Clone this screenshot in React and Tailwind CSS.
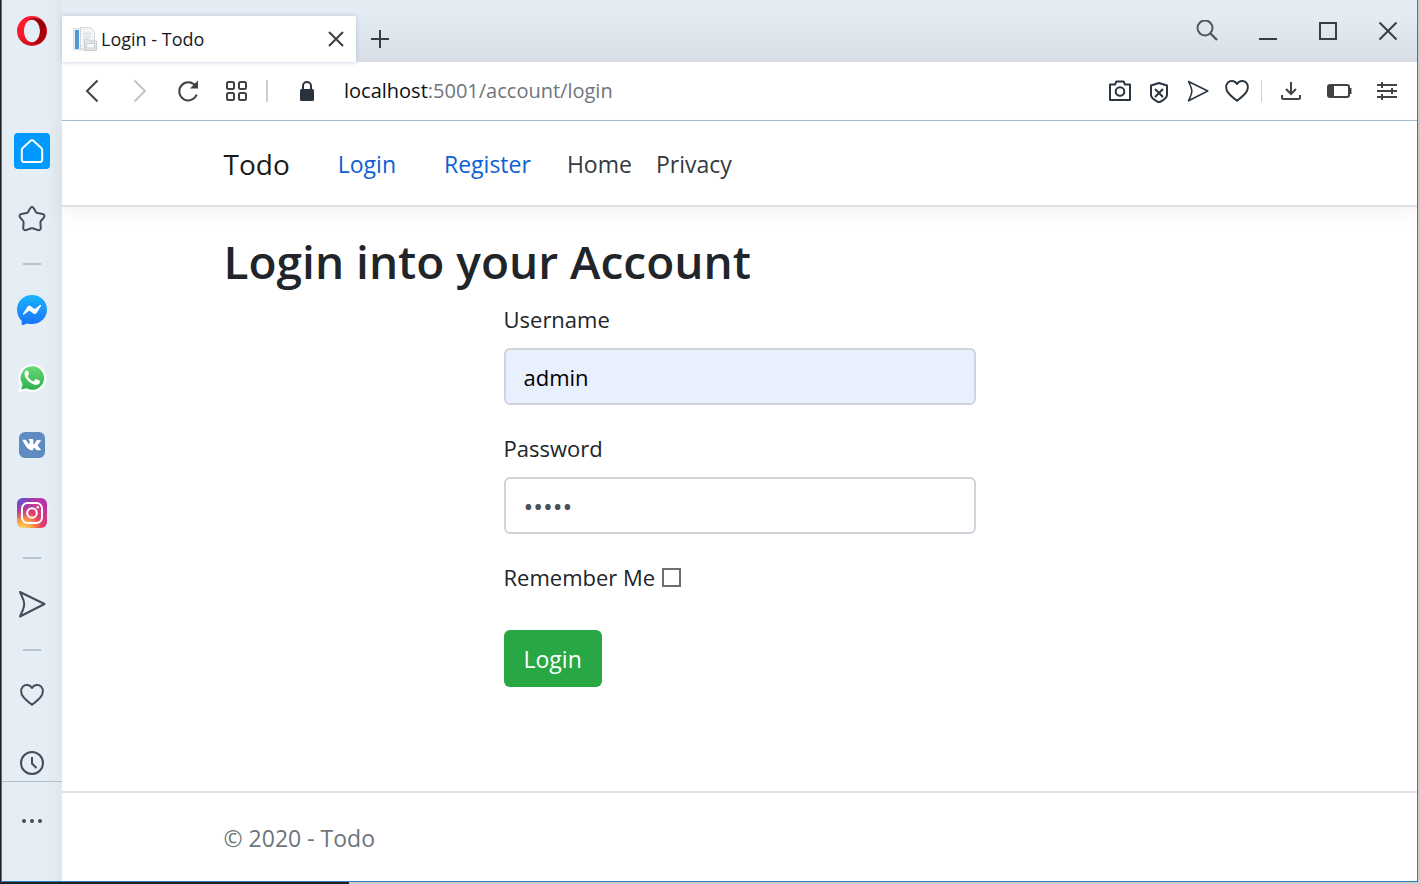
import React from "react";

function Svg({ w = 24, h = w, box, className = "", children }) {
  return (
    <svg
      width={w}
      height={h}
      viewBox={box || `0 0 ${w} ${h}`}
      fill="none"
      stroke="currentColor"
      strokeWidth="2"
      className={`shrink-0 ${className}`}
      aria-hidden="true"
    >
      {children}
    </svg>
  );
}

function OperaLogo() {
  return (
    <Svg w={30}>
      <defs>
        <linearGradient id="op-l" x1="0" y1="0" x2="0" y2="1">
          <stop offset="0" stopColor="#ff1b2d" />
          <stop offset="0.6" stopColor="#fa1a2c" />
          <stop offset="1" stopColor="#c8101f" />
        </linearGradient>
        <linearGradient id="op-r" x1="0" y1="0" x2="0" y2="1">
          <stop offset="0" stopColor="#8f0009" />
          <stop offset="1" stopColor="#b8000f" />
        </linearGradient>
      </defs>
      <path
        fillRule="evenodd"
        stroke="none"
        fill="url(#op-l)"
        d="M15 0a15 15 0 1 0 0 30a15 15 0 1 0 0-30zM15 3.6c4.4 0 8 5 8 11.4s-3.600 11.400-8 11.400-8-5-8-11.400 3.600-11.400 8-11.400z"
      />
      <path
        stroke="none"
        fill="url(#op-r)"
        d="M10 5.600C12 3 14.500 2 17 2.200c3.200.200 5.500 1 7.500 1.600a15 15 0 0 1 0 22.400c-3 1.300-5 1.800-7.500 1.600-2.500-.200-5-1.200-7-3.400 1.400 1.200 3.200 2 5 2 4.400 0 8-5 8-11.400S19.400 3.600 15 3.600c-1.800 0-3.600.800-5 2z"
      />
    </Svg>
  );
}

function HomeIcon() {
  return (
    <Svg w={24} className="text-white">
      <path strokeLinejoin="round" d="M12 1.200c.700 0 1.200.200 1.700.700l7.300 6.800c.800.700 1.200 1.500 1.200 2.500v9.300a2.500 2.500 0 0 1-2.500 2.500H4.300a2.500 2.500 0 0 1-2.500-2.500v-9.300c0-1 .400-1.800 1.200-2.500l7.300-6.800c.500-.500 1-.700 1.700-.700z" />
    </Svg>
  );
}

function StarIcon() {
  return (
    <Svg w={28}>
      <path
        strokeLinejoin="round"
        d="M12.200 3.200c.800-1.500 2.800-1.500 3.600 0l2.100 3.700c.300.500.800.900 1.400 1l5.400 1c1.700.300 2.300 2.100 1.200 3.400l-3 3.700c-.400.500-.500 1-.500 1.600l.4 5.300c.1 1.700-1.300 2.700-2.800 2.200l-4.600-1.600c-.900-.300-1.900-.300-2.800 0L8 25.100c-1.500.500-2.900-.500-2.800-2.200l.4-5.300c0-.600-.1-1.100-.5-1.600l-3-3.700c-1.100-1.300-.5-3.100 1.200-3.400l5.400-1c.600-.100 1.100-.5 1.400-1z"
      />
    </Svg>
  );
}

function MessengerIcon() {
  return (
    <Svg w={30}>
      <defs>
        <linearGradient id="msg" x1="0" y1="0" x2="0" y2="1">
          <stop offset="0" stopColor="#19b5fb" />
          <stop offset="1" stopColor="#1a72fb" />
        </linearGradient>
      </defs>
      <path stroke="none" fill="url(#msg)" d="M15 0c8.500 0 15 6.200 15 14.500S23.500 29 15 29c-1.700 0-3.200-.200-4.600-.600L6 30c-.800.300-1.300-.200-1.300-1l-.1-3.300C1.700 23 0 19.200 0 14.500 0 6.200 6.500 0 15 0z" />
      <path stroke="none" fill="#fff" d="M6 18.700l4.400-7c.700-1.100 2.200-1.400 3.200-.600l3.500 2.600c.300.200.800.200 1.100 0l4.700-3.600c.600-.5 1.500.3 1.100.9l-4.400 7c-.7 1.100-2.200 1.400-3.200.6l-3.500-2.600c-.3-.2-.8-.2-1.100 0l-4.700 3.600c-.6.5-1.500-.3-1.100-.9z" />
    </Svg>
  );
}

function WhatsAppIcon() {
  return (
    <Svg w={30}>
      <defs>
        <linearGradient id="wa" x1="0" y1="0" x2="0" y2="1">
          <stop offset="0" stopColor="#68d878" />
          <stop offset="1" stopColor="#2fb14a" />
        </linearGradient>
      </defs>
      <path stroke="none" fill="#fbfdfc" d="M15.500 1A14 14 0 1 1 9 27.400L1 29.600l2.200-7.700A14 14 0 0 1 15.500 1z" />
      <path stroke="none" fill="url(#wa)" d="M15.500 3.200A11.800 11.800 0 1 1 9.400 25.200L4.200 26.500l1.400-5A11.800 11.800 0 0 1 15.500 3.200z" />
      <path stroke="none" fill="#fff" d="M11.300 8.500c-.4-.9-.8-.9-1.300-.9-.9 0-2.500 1-2.500 3.400 0 2.500 1.900 5 3.100 6.300 1.600 1.800 4.500 4.300 8 4.600 2 .2 3.700-1 4.100-2 .3-.9.3-1.700.2-1.900-.2-.4-3.100-1.700-3.600-1.800-.5-.2-.8-.1-1.100.3l-1.200 1.500c-.3.4-.7.4-1.100.2-2.200-.9-4.200-2.800-5.100-4.600-.2-.4 0-.7.2-1l.9-1.100c.3-.4.2-.7.1-1z" />
    </Svg>
  );
}

function VkIcon() {
  return (
    <Svg w={26}>
      <rect width="26" height="26" rx="6" fill="#5f8cc0" stroke="none" />
      <path stroke="none" fill="#fff" d="M12.800 18.700h1.100s.4 0 .5-.3c.2-.2.2-.6.2-.6s0-1.900.8-2.200c.9-.3 2 1.800 3.200 2.600.9.6 1.600.5 1.600.5l3-.1s1.600-.1.800-1.400c-.1-.1-.5-1-2.400-2.800-2-1.900-1.700-1.600.7-4.800 1.400-1.900 2-3.100 1.800-3.600-.2-.5-1.200-.4-1.200-.4l-3.400.1s-.3 0-.4.1c-.2.1-.3.3-.3.3s-.5 1.400-1.200 2.600c-1.500 2.600-2.200 2.700-2.400 2.600-.6-.4-.4-1.600-.4-2.500 0-2.600.4-3.700-.8-4-.4-.1-.7-.2-1.700-.2-1.300 0-2.400 0-3 .3-.4.2-.7.7-.5.7.2 0 .7.1 1 .5.3.5.3 1.500.3 1.500s.2 2.900-.4 3.200c-.5.3-1.100-.2-2.400-2.500C6.300 7.100 5.800 5.800 5.800 5.800s-.1-.2-.3-.3-.5-.2-.5-.2l-3 .1s-.5 0-.6.2c-.2.2 0 .5 0 .5s2.500 5.900 5.300 8.900c2.700 2.800 5.700 3.700 6.100 3.700z" transform="translate(2.500 3.400) scale(.8)" />
    </Svg>
  );
}

function InstagramIcon() {
  return (
    <Svg w={30}>
      <defs>
        <radialGradient id="ig" cx="0.2" cy="1.05" r="1.1">
          <stop offset="0" stopColor="#ffdd62" />
          <stop offset="0.3" stopColor="#fb9a45" />
          <stop offset="0.58" stopColor="#e93c67" />
          <stop offset="1" stopColor="#b634a8" />
        </radialGradient>
        <radialGradient id="ig2" cx="0" cy="0" r="0.75">
          <stop offset="0" stopColor="#3f5fdb" />
          <stop offset="1" stopColor="#8a3ac8" stopOpacity="0" />
        </radialGradient>
      </defs>
      <rect width="30" height="30" rx="6" fill="url(#ig)" stroke="none" />
      <rect width="30" height="30" rx="6" fill="url(#ig2)" stroke="none" />
      <rect x="5" y="5" width="20" height="20" rx="5.500" stroke="#fff" />
      <circle cx="15" cy="15" r="4.800" stroke="#fff" />
      <circle cx="20.800" cy="9.200" r="1.300" fill="#fff" stroke="none" />
    </Svg>
  );
}

function SendIcon({ size = 28, className }) {
  return (
    <Svg w={size} box="0 0 28 28" className={className}>
      <path strokeLinejoin="round" d="M2 2l24.500 12L2 26.500c1.800-4.500 4.200-8 4.200-12.500S3.800 6.500 2 2z" />
    </Svg>
  );
}

function HeartIcon() {
  return (
    <Svg w={24}>
      <path strokeLinejoin="round" d="M12 5C10 1.400 5.200 1 2.800 3.700c-2.400 2.800-1.900 6.900.3 9.900 2.200 3 5.500 5.600 8.900 8.100 3.400-2.500 6.700-5.100 8.900-8.100 2.200-3 2.700-7.100.3-9.900C18.800 1 14 1.400 12 5z" />
    </Svg>
  );
}

function ClockIcon() {
  return (
    <Svg w={26}>
      <circle cx="13" cy="13" r="11" />
      <path d="M13 7v6.500l4.500 4.500" />
    </Svg>
  );
}

function PageIcon() {
  return (
    <Svg w={24}>
      <path d="M.5 1.500h14V23H.5z" fill="#eef1f4" stroke="#dde1e5" strokeWidth="1" />
      <path d="M2 3h4v19H2z" fill="#4d9bd0" stroke="none" />
      <path d="M7.500.5h10l4 4V22h-14z" fill="#f3f4f5" stroke="#d5d8da" strokeWidth="1" />
      <path d="M10 6.500h8M10 9.500h8" stroke="#e1e4e6" />
      <path d="M11.500 12h4l1.500 2h6.500v9.500h-12z" fill="#e5e8ea" stroke="#c6cacd" strokeWidth="1" />
      <path d="M13.500 16.500h8v4.500h-8z" fill="#fafafa" stroke="#c9cdd0" strokeWidth="1" />
    </Svg>
  );
}

function SideButton({ label, active, children }) {
  return (
    <button
      type="button"
      aria-label={label}
      className={
        active
          ? "flex size-9 items-center justify-center rounded bg-[#0099ff]"
          : "flex size-9 items-center justify-center"
      }
    >
      {children}
    </button>
  );
}

function Divider() {
  return <span className="-my-[5px] h-[2px] w-[18px] shrink-0 bg-[#b7c3ce]" />;
}

function Sidebar() {
  return (
    <aside className="flex w-[60px] shrink-0 flex-col bg-linear-to-r from-[#e5edf5] from-70% to-[#dfe7ef] text-[#454c57]">
      <button type="button" aria-label="Opera menu" className="mb-[71px] flex h-[62px] items-center justify-center">
        <OperaLogo />
      </button>
      <nav aria-label="Sidebar" className="flex flex-1 flex-col items-center justify-between border-b border-[#b0c0cd]">
        <SideButton label="Home" active><HomeIcon /></SideButton>
        <SideButton label="Bookmarks"><StarIcon /></SideButton>
        <Divider />
        <SideButton label="Messenger"><MessengerIcon /></SideButton>
        <SideButton label="WhatsApp"><WhatsAppIcon /></SideButton>
        <SideButton label="VK"><VkIcon /></SideButton>
        <SideButton label="Instagram"><InstagramIcon /></SideButton>
        <Divider />
        <SideButton label="My Flow"><SendIcon /></SideButton>
        <Divider />
        <SideButton label="Favourites"><HeartIcon /></SideButton>
        <SideButton label="History"><ClockIcon /></SideButton>
      </nav>
      <button type="button" aria-label="More" className="mb-[22px] flex h-[77px] items-center justify-center">
        <Svg w={20} h={4}>
          <g fill="currentColor" stroke="none">
            <circle cx="2" cy="2" r="2" />
            <circle cx="10" cy="2" r="2" />
            <circle cx="18" cy="2" r="2" />
          </g>
        </Svg>
      </button>
    </aside>
  );
}

function TabBar() {
  return (
    <div className="flex h-[62px] items-end bg-linear-to-b from-[#e4ecf4] from-20% to-[#d8dee6] text-[#3b3e40]">
      <div className="flex h-[46px] w-[294px] items-center rounded-t-xs bg-white pr-3 pl-[11px] shadow-[0_0_5px_#b9c6d6]">
        <PageIcon />
        <span className="ml-1 flex-1 text-lg text-[#16191c]">Login - Todo</span>
        <button type="button" aria-label="Close tab">
          <Svg w={16}><path d="M1 1l14 14M15 1L1 15" /></Svg>
        </button>
      </div>
      <button type="button" aria-label="New tab" className="flex h-[46px] w-12 items-center justify-center">
        <Svg w={18}><path d="M9 0v18M0 9h18" /></Svg>
      </button>
      <div className="ml-auto flex h-full items-center gap-10 pr-[19px]">
        <button type="button" aria-label="Search tabs">
          <Svg w={22} className="text-[#55585b]">
            <circle cx="9" cy="8" r="7.500" />
            <path d="M14.500 13.500L21 20" strokeWidth="2.400" />
          </Svg>
        </button>
        <button type="button" aria-label="Minimize">
          <Svg w={20}><path d="M1 18h18" /></Svg>
        </button>
        <button type="button" aria-label="Maximize">
          <Svg w={20}><path d="M2 2h16v16H2z" /></Svg>
        </button>
        <button type="button" aria-label="Close window">
          <Svg w={20}><path d="M1.500 1.500l17 17M18.500 1.500l-17 17" /></Svg>
        </button>
      </div>
    </div>
  );
}

function AddressBar() {
  return (
    <div className="flex h-[59px] items-center border-b border-[#a9bccb] pr-[19px] pl-[18px] text-[#3f4346]">
      <div className="flex items-center gap-6">
        <button type="button" aria-label="Back">
          <Svg w={24}><path d="M17.500 1.500L7 12l10.500 10.500" /></Svg>
        </button>
        <button type="button" aria-label="Forward" className="text-[#c4c4c4]">
          <Svg w={24}><path d="M6.500 1.500L17 12 6.500 22.500" /></Svg>
        </button>
        <button type="button" aria-label="Reload">
          <Svg w={24}>
            <path d="M19.500 7a9 9 0 1 0 1.200 8.500" />
            <path d="M22 1.500v8h-8z" fill="currentColor" stroke="none" />
          </Svg>
        </button>
        <button type="button" aria-label="Speed dial">
          <Svg w={24}>
            <rect x="3" y="3" width="7" height="7" rx="1.500" />
            <rect x="15" y="3" width="7" height="7" rx="1.500" />
            <rect x="3" y="14" width="7" height="7" rx="1.500" />
            <rect x="15" y="14" width="7" height="7" rx="1.500" />
          </Svg>
        </button>
      </div>
      <span className="ml-[18px] h-[22px] w-[2px] bg-[#cfcfcf]" />
      <Svg w={16} h={22} className="ml-[31px] text-[#2a333d]">
        <path d="M4 10V6a4 4 0 0 1 8 0v4" />
        <rect x="1" y="9" width="14" height="12" rx="1.500" fill="currentColor" stroke="none" />
      </Svg>
      <p className="ml-[29px] flex-1 text-xl text-[#6e757c]">
        <span className="text-[#101214]">localhost</span>:5001/account/login
      </p>
      <div className="flex items-center text-[#2b3540]">
        <button type="button" aria-label="Snapshot" className="mr-[18px]">
          <Svg w={24}>
            <path strokeLinejoin="round" d="M2 5.500h5l1.500-3h7l1.500 3h5V21H2z" />
            <circle cx="12" cy="12.500" r="4.300" />
          </Svg>
        </button>
        <button type="button" aria-label="Ad blocker" className="mr-[19px]">
          <Svg w={18} h={24}>
            <path strokeLinejoin="round" d="M9 4l8 2.500V16c0 3.500-4 5.500-8 7.500C5 21.500 1 19.500 1 16V6.500z" />
            <path d="M5 10l8 8M13 10l-8 8" />
          </Svg>
        </button>
        <button type="button" aria-label="Send to My Flow" className="mr-4">
          <SendIcon size={22} />
        </button>
        <button type="button" aria-label="Add to favourites" className="mr-3">
          <HeartIcon />
        </button>
        <span className="mr-[18px] h-[22px] w-px bg-[#cdcfd1]" />
        <div className="flex items-center gap-6 text-[#3f4346]">
          <button type="button" aria-label="Downloads">
            <Svg w={22}>
              <path d="M11 2v11M6 9l5 5 5-5M2 15v2.500c0 1 .5 1.500 1.500 1.500h15c1 0 1.500-.5 1.500-1.500V15" />
            </Svg>
          </button>
          <button type="button" aria-label="Battery saver">
            <Svg w={26} h={16}>
              <rect x="2" y="2" width="21" height="12" rx="2" />
              <path d="M2 2h6v12H2z" fill="currentColor" stroke="none" />
              <path d="M24.500 5v6" />
            </Svg>
          </button>
          <button type="button" aria-label="Easy setup">
            <Svg w={22}>
              <path d="M1 5h20M1 11h20M1 17h20M6 2v6M16 8v6M6 14v6" />
            </Svg>
          </button>
        </div>
      </div>
    </div>
  );
}

function SiteHeader() {
  return (
    <header className="border-b-2 border-[#dee2e6] bg-white shadow-[0_6px_18px_rgba(0,0,0,0.05)]">
      <div className="mx-auto flex h-[84px] max-w-[1080px] items-center px-6 pt-[2px]">
        <a href="#home" className="mr-12 text-[28px] text-[#1a1a1a]">Todo</a>
        <nav aria-label="Main" className="flex items-center text-[23px] text-[#343a40]">
          <a href="#login" className="mr-12 text-[#0d5fd3]">Login</a>
          <a href="#register" className="mr-9 text-[#0d5fd3]">Register</a>
          <a href="#home" className="mr-6">Home</a>
          <a href="#privacy">Privacy</a>
        </nav>
      </div>
    </header>
  );
}

function LoginForm() {
  const field = "mb-6 block h-[57px] w-full rounded-md border-2 border-[#ced4da] px-[18px] outline-none";
  return (
    <form className="mx-auto max-w-[472px]" onSubmit={(e) => e.preventDefault()}>
      <label htmlFor="username" className="mb-[10px] block">Username</label>
      <input id="username" type="text" defaultValue="admin" autoComplete="off" className={`${field} bg-[#e8f0fe] text-black`} />
      <label htmlFor="password" className="mb-[10px] block">Password</label>
      <input id="password" type="password" defaultValue="admin" autoComplete="off" className={`${field} bg-white text-[26px] text-[#495057]`} />
      <div className="mb-[34px] flex items-center gap-[7px]">
        <label htmlFor="remember">Remember Me</label>
        <input id="remember" type="checkbox" className="size-[19px] appearance-none border-2 border-[#6f6f6f] bg-white checked:bg-[#6f6f6f]" />
      </div>
      <button type="submit" className="h-[57px] rounded-md bg-[#28a745] px-5 text-[23px] text-white">Login</button>
    </form>
  );
}

export default function App() {
  return (
    <div className="flex min-h-screen bg-[linear-gradient(to_right,#222224_349px,#cbcbcb_349px)] pr-[2px] pb-[2px] pl-px font-['Open_Sans','Noto_Sans',sans-serif]">
      <div className="flex flex-1 border-x border-b border-[#2b7fc0] bg-white">
        <Sidebar />
        <div className="flex min-w-0 flex-1 flex-col">
          <TabBar />
          <AddressBar />
          <div className="flex flex-1 flex-col text-[22px] leading-[38px] text-[#212529]">
            <SiteHeader />
            <main className="mx-auto w-full max-w-[1080px] flex-1 px-6 py-6">
              <h1 className="mb-2 text-[46px] leading-[61px] font-semibold">Login into your Account</h1>
              <LoginForm />
            </main>
            <footer className="border-t-2 border-[#dee2e6] text-[23px] text-[#6c757d]">
              <div className="mx-auto flex h-[88px] max-w-[1080px] items-center px-6 pt-[2px]">© 2020 - Todo</div>
            </footer>
          </div>
        </div>
      </div>
    </div>
  );
}
